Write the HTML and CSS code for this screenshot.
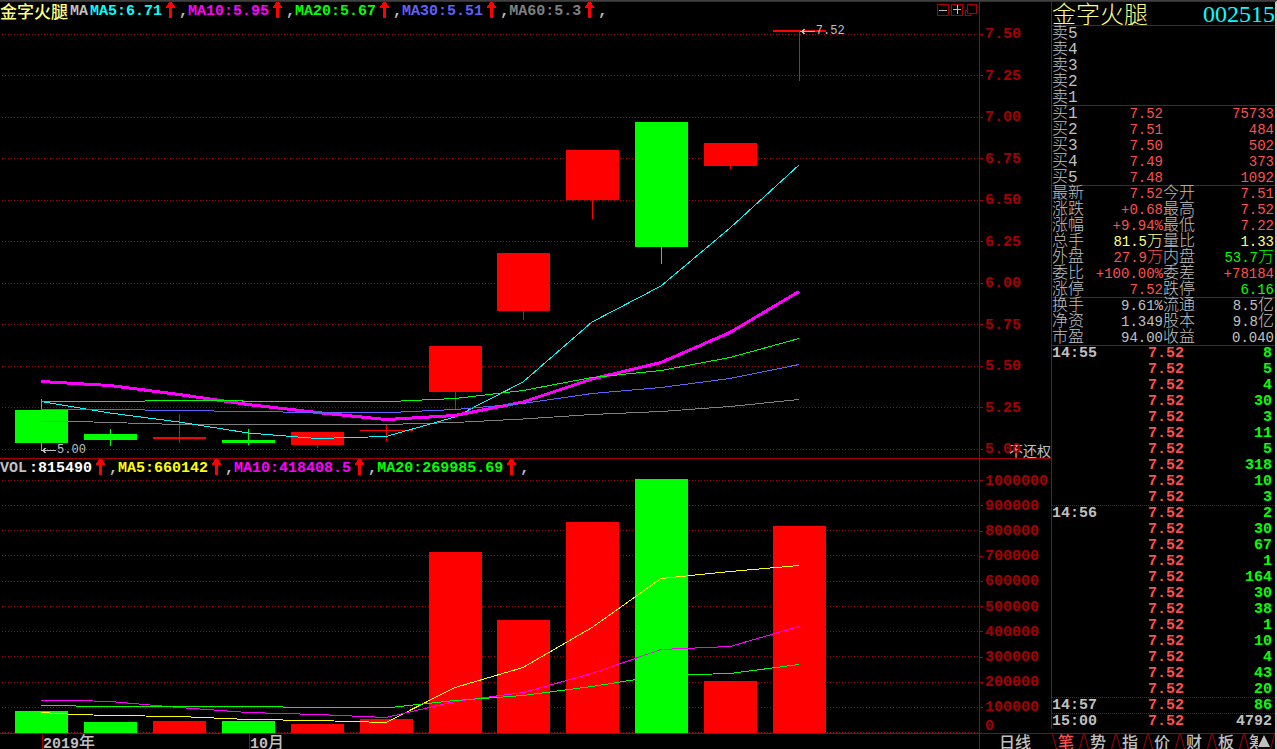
FILE: index.html
```html
<!DOCTYPE html>
<html lang="zh-CN">
<head>
<meta charset="utf-8">
<title>金字火腿 002515</title>
<link rel="stylesheet" href="styles.css">
</head>
<body>
<svg class="defs" aria-hidden="true">
  <symbol id="up" viewBox="0 0 17 16"><path fill="#f00" d="M7 16V6H4V4H5V3H6V1H7V0H10V1H11V3H12V4H13V6H10V16z"/></symbol>
  <symbol id="peak" viewBox="0 0 10 15"><path fill="none" stroke="#a80000" d="M0.5 15L4.5 0L5.5 0L9.5 15"/></symbol>
</svg>
<div class="app">
  <main class="charts">
    <section class="panel">
      <div class="plot">
        <div class="legend">
          <h1 class="name">金字火腿</h1><span class="tag gray">MA</span>
          <span class="cyan">MA5:6.71</span><svg class="up"><use href="#up"/></svg><span class="gray">,</span>
          <span class="magenta">MA10:5.95</span><svg class="up"><use href="#up"/></svg><span class="gray">,</span>
          <span class="green">MA20:5.67</span><svg class="up"><use href="#up"/></svg><span class="gray">,</span>
          <span class="blue">MA30:5.51</span><svg class="up"><use href="#up"/></svg><span class="gray">,</span>
          <span class="dim">MA60:5.3</span><svg class="up"><use href="#up"/></svg><span class="gray">,</span>
          <div class="tools">
            <button type="button" aria-label="缩小"><svg viewBox="0 0 12 12"><path stroke="#a80000" fill="none" d="M.5.5h11v11h-11z"/><path stroke="#c0c0c0" d="M2 6.5h8"/></svg></button>
            <button type="button" aria-label="放大"><svg viewBox="0 0 12 12"><path stroke="#a80000" fill="none" d="M.5.5h11v11h-11z"/><path stroke="#c0c0c0" d="M2 5.5h8M6.5 1v9"/></svg></button>
            <button type="button" aria-label="还原"><svg viewBox="0 0 12 12"><path stroke="#a80000" fill="none" d="M2.5.5h9v9h-9zM2.5 6.5h-2v5h5v-2"/></svg></button>
          </div>
        </div>
        <div class="canvas">
          <svg class="chart" viewBox="0 22 979 436" preserveAspectRatio="none">
            <path class="grid" d="M2 34.5H979M2 75.5H979M2 117.5H979M2 158.5H979M2 200.5H979M2 241.5H979M2 283.5H979M2 324.5H979M2 366.5H979M2 407.5H979M2 449.5H979"/>
            <path class="bull" d="M153 437h53v2h-53zM179 414h1v29h-1zM291 432h53v13h-53zM317 445h1v3h-1zM360 430h53v1h-53zM386 425h1v16h-1zM429 346h53v46h-53zM455 392h1v17h-1zM497 253h53v58h-53zM523 311h1v9h-1zM566 150h53v50h-53zM592 200h1v19h-1zM704 143h53v23h-53zM730 166h1v3h-1zM773 30h53v2h-53zM799 32h1v49h-1z"/>
            <path class="bear" d="M15 410h53v33h-53zM41 399h1v51h-1zM84 434h53v6h-53zM110 429h1v17h-1zM222 440h53v3h-53zM248 429h1v16h-1zM635 122h53v125h-53zM661 247h1v17h-1z"/>
            <path class="line s-dim" d="M41 421.5L76 421.5L110 422.5L179 424.5L386 424.5L455 422.5L523 419L592 414.5L661 411.5L730 406.5L799 399.5"/>
            <path class="line s-cyan" d="M41 401.5L110 413L179 422L248 433L317 438.5L386 436.5L455 417L523 382L592 322L661 286L730 228L799 165"/>
            <path class="line thick s-magenta" d="M41 381.5L110 385.5L179 394.5L248 404.5L317 412.5L386 419.5L455 415.5L523 402L592 379L661 362.5L730 332.5L799 291.5"/>
            <path class="line s-blue" d="M41 409.5L144 409.5L146 410.5L213 410.5L215 411.5L282 411.5L284 412.5L390 412.5L455 409.5L523 403.5L592 393.5L661 387.5L730 378.5L799 364.5"/>
            <path class="line s-green" d="M41 401.5L144 401.5L146 400.5L240 400.5L245 401.5L390 401.5L455 398.5L523 390.5L592 377.5L661 370.5L730 357.5L799 338.5"/>
          </svg>
          <span class="mark high"><svg viewBox="0 0 16 7"><path d="M0 3.5h15M5 1L1 3.5L5 6"/></svg>7.52</span>
          <span class="mark low"><svg viewBox="0 0 16 7"><path d="M0 3.5h15M5 1L1 3.5L5 6"/></svg>5.00</span>
        </div>
      </div>
      <div class="axis">
        <span class="adjust">不还权</span>
        <ol class="ticks price">
          <li>7.50</li><li>7.25</li><li>7.00</li><li>6.75</li><li>6.50</li><li>6.25</li><li>6.00</li><li>5.75</li><li>5.50</li><li>5.25</li><li>5.00</li>
        </ol>
      </div>
    </section>
    <section class="panel">
      <div class="plot volplot">
        <div class="legend">
          <span class="tag vol gray">VOL</span>
          <span class="white">:815490</span><svg class="up"><use href="#up"/></svg><span class="gray">,</span>
          <span class="yellow">MA5:660142</span><svg class="up"><use href="#up"/></svg><span class="gray">,</span>
          <span class="magenta">MA10:418408.5</span><svg class="up"><use href="#up"/></svg><span class="gray">,</span>
          <span class="green">MA20:269985.69</span><svg class="up"><use href="#up"/></svg><span class="gray">,</span>
        </div>
        <div class="canvas">
          <svg class="chart" viewBox="0 477 979 256" preserveAspectRatio="none">
            <path class="grid" d="M2 480.5H979M2 505.5H979M2 530.5H979M2 555.5H979M2 581.5H979M2 606.5H979M2 631.5H979M2 656.5H979M2 682.5H979M2 707.5H979M2 732.5H979"/>
            <path class="bull" d="M153 721h53v12h-53zM291 724h53v9h-53zM360 719h53v14h-53zM429 552h53v181h-53zM497 620h53v113h-53zM566 522h53v211h-53zM704 681h53v52h-53zM773 526h53v207h-53z"/>
            <path class="bear" d="M15 711h53v22h-53zM84 722h53v11h-53zM222 721h53v12h-53zM635 479h53v254h-53z"/>
            <path class="line s-yellow" d="M41 712.5L76 714.5L110 715.5L179 716.5L248 719.5L317 720.5L386 722.5L455 687.5L523 667.5L592 627.5L661 578.5L730 571.5L799 565.5"/>
            <path class="line s-magenta" d="M41 700.5L76 700.5L110 701.5L179 707.5L248 712.5L317 714.5L386 717.5L455 701.5L523 692.5L592 673.5L661 649.5L730 646.5L799 626.5"/>
            <path class="line s-green" d="M41 705.5L75 705.5L77 706.5L282 706.5L284 707.5L390 707.5L455 700.5L523 695.5L592 686.5L661 675.5L730 673.5L799 664.5"/>
          </svg>
        </div>
      </div>
      <div class="axis">
        <ol class="ticks volume">
          <li>1000000</li><li>900000</li><li>800000</li><li>700000</li><li>600000</li><li>500000</li><li>400000</li><li>300000</li><li>200000</li><li>100000</li><li class="zero">0</li>
        </ol>
      </div>
    </section>
    <footer class="dates">
      <div class="months"><time>2019<b>年</b></time><time>10<b>月</b></time></div>
      <div class="period">日线</div>
    </footer>
  </main>

  <aside class="side">
    <header class="stock"><h2>金字火腿</h2><span>002515</span></header>
    <table class="quote">
      <tbody>
        <tr><th>卖5</th><td></td><td></td></tr>
        <tr><th>卖4</th><td></td><td></td></tr>
        <tr><th>卖3</th><td></td><td></td></tr>
        <tr><th>卖2</th><td></td><td></td></tr>
        <tr><th>卖1</th><td></td><td></td></tr>
      </tbody>
    </table>
    <table class="quote red">
      <tbody>
        <tr><th>买1</th><td>7.52</td><td>75733</td></tr>
        <tr><th>买2</th><td>7.51</td><td>484</td></tr>
        <tr><th>买3</th><td>7.50</td><td>502</td></tr>
        <tr><th>买4</th><td>7.49</td><td>373</td></tr>
        <tr><th>买5</th><td>7.48</td><td>1092</td></tr>
      </tbody>
    </table>
    <table class="quote red">
      <tbody>
        <tr><th>最新</th><td>7.52</td><th>今开</th><td>7.51</td></tr>
        <tr><th>涨跌</th><td>+0.68</td><th>最高</th><td>7.52</td></tr>
        <tr><th>涨幅</th><td>+9.94%</td><th>最低</th><td>7.22</td></tr>
        <tr><th>总手</th><td class="pale">81.5<i>万</i></td><th>量比</th><td class="pale">1.33</td></tr>
        <tr><th>外盘</th><td>27.9<i>万</i></td><th>内盘</th><td class="green">53.7<i>万</i></td></tr>
        <tr><th>委比</th><td>+100.00%</td><th>委差</th><td>+78184</td></tr>
        <tr><th>涨停</th><td>7.52</td><th>跌停</th><td class="green">6.16</td></tr>
      </tbody>
    </table>
    <table class="quote">
      <tbody>
        <tr><th>换手</th><td>9.61%</td><th>流通</th><td>8.5<i>亿</i></td></tr>
        <tr><th>净资</th><td>1.349</td><th>股本</th><td>9.8<i>亿</i></td></tr>
        <tr><th>市盈</th><td>94.00</td><th>收益</th><td>0.040</td></tr>
      </tbody>
    </table>
    <table class="tape">
      <tbody>
        <tr><th>14:55</th><td>7.52</td><td>8</td></tr>
        <tr><th></th><td>7.52</td><td>5</td></tr>
        <tr><th></th><td>7.52</td><td>4</td></tr>
        <tr><th></th><td>7.52</td><td>30</td></tr>
        <tr><th></th><td>7.52</td><td>3</td></tr>
        <tr><th></th><td>7.52</td><td>11</td></tr>
        <tr><th></th><td>7.52</td><td>5</td></tr>
        <tr><th></th><td>7.52</td><td>318</td></tr>
        <tr><th></th><td>7.52</td><td>10</td></tr>
        <tr><th></th><td>7.52</td><td>3</td></tr>
        <tr class="minute"><th>14:56</th><td>7.52</td><td>2</td></tr>
        <tr><th></th><td>7.52</td><td>30</td></tr>
        <tr><th></th><td>7.52</td><td>67</td></tr>
        <tr><th></th><td>7.52</td><td>1</td></tr>
        <tr><th></th><td>7.52</td><td>164</td></tr>
        <tr><th></th><td>7.52</td><td>30</td></tr>
        <tr><th></th><td>7.52</td><td>38</td></tr>
        <tr><th></th><td>7.52</td><td>1</td></tr>
        <tr><th></th><td>7.52</td><td>10</td></tr>
        <tr><th></th><td>7.52</td><td>4</td></tr>
        <tr><th></th><td>7.52</td><td>43</td></tr>
        <tr><th></th><td>7.52</td><td>20</td></tr>
        <tr class="minute"><th>14:57</th><td>7.52</td><td>86</td></tr>
        <tr class="minute"><th>15:00</th><td>7.52</td><td class="gray">4792</td></tr>
      </tbody>
    </table>
    <nav class="tabs">
      <svg class="half" viewBox="5 0 5 15"><path fill="none" stroke="#a80000" d="M5.5 0L9.5 15"/></svg>
      <button type="button" class="active">笔</button><svg><use href="#peak"/></svg>
      <button type="button">势</button><svg><use href="#peak"/></svg>
      <button type="button">指</button><svg><use href="#peak"/></svg>
      <button type="button">价</button><svg><use href="#peak"/></svg>
      <button type="button">财</button><svg><use href="#peak"/></svg>
      <button type="button">板</button><svg><use href="#peak"/></svg>
      <button type="button" class="cut">筹</button>
      <button type="button" class="more" aria-label="更多"><svg viewBox="0 0 12 15"><path fill="#c0c0c0" d="M6 1L12 13H0z"/></svg></button>
      <svg class="half" viewBox="0 0 5 15"><path fill="none" stroke="#a80000" d="M0.5 15L4.5 0"/></svg>
    </nav>
  </aside>
</div>
</body>
</html>
```
FILE: styles.css
```css
:root {
  --rule: #a80000;
  --text: #c0c0c0;
  --mono: "Liberation Mono", "Noto Sans CJK SC", monospace;
  --cjk: "Noto Sans CJK SC", sans-serif;
}

* { box-sizing: border-box; }

body {
  margin: 0;
  background: #000;
  color: var(--text);
  font-family: var(--mono);
  font-size: 15px;
}

h1, h2, ol { margin: 0; padding: 0; }
ol { list-style: none; }
button { border: 0; padding: 0; background: none; color: inherit; }
.defs { position: absolute; width: 0; height: 0; }

.app {
  display: grid;
  grid-template-columns: minmax(0, 1fr) 226px;
  height: 100vh;
  min-height: 748px;
  border-top: 1px solid #404040;
}

.gray { color: var(--text); }
.dim { color: #808080; }
.cyan { color: #0ff; }
.magenta { color: #f0f; }
.green { color: #0f0; }
.blue { color: #6060ff; }
.yellow { color: #ff0; }
.white { color: #fff; }
.pale { color: #ffff80; }

/* charts */
.charts {
  display: grid;
  grid-template-rows: minmax(0, 457fr) minmax(0, 275fr) 15px;
  border-top: 1px solid var(--rule);
  min-height: 0;
}

.panel {
  display: grid;
  grid-template-columns: minmax(0, 1fr) 72px;
  border-bottom: 1px solid var(--rule);
}

.plot {
  display: grid;
  grid-template-rows: 20px minmax(0, 1fr);
  min-height: 0;
}
.volplot { grid-template-rows: 18px minmax(0, 1fr); }

.legend {
  display: flex;
  font-weight: bold;
  line-height: 20px;
  white-space: nowrap;
}
.name { color: #ffff80; font: 500 17px/18px var(--cjk); }
.tag { margin: 0 2px; }
.vol { margin: 0 2px 0 0; }
.up { width: 17px; height: 16px; flex: none; }

.tools {
  display: flex;
  gap: 2px;
  margin: 2px 2px 0 auto;
}
.tools button { width: 12px; height: 12px; }
.tools svg { display: block; width: 12px; height: 12px; shape-rendering: crispEdges; }

.canvas { position: relative; min-height: 0; }
.chart { display: block; width: 100%; height: 100%; shape-rendering: crispEdges; }
.chart path { vector-effect: non-scaling-stroke; }
.grid { stroke: var(--rule); stroke-dasharray: 1 2; }
.bull { fill: #f00; }
.bear { fill: #0f0; }
.line { fill: none; stroke-width: 1px; }
.thick { stroke-width: 3px; }
.s-dim { stroke: #808080; }
.s-cyan { stroke: #0ff; }
.s-magenta { stroke: #f0f; }
.s-blue { stroke: #6060ff; }
.s-green { stroke: #0f0; }
.s-yellow { stroke: #ff0; }

.mark {
  position: absolute;
  display: flex;
  align-items: center;
  font-size: 12px;
  line-height: 14px;
}
.mark svg { width: 16px; height: 7px; fill: none; stroke: var(--text); shape-rendering: crispEdges; }
.high { left: 81.7%; top: 2px; }
.low { left: 4.2%; bottom: 1px; }

.axis {
  position: relative;
  border-left: 1px solid var(--rule);
  color: var(--rule);
  font-weight: bold;
}
.adjust {
  position: absolute;
  right: 0;
  bottom: 0;
  color: var(--text);
  font: 14px/15px var(--cjk);
}
.ticks {
  position: relative;
  display: flex;
  flex-direction: column;
  height: 100%;
}
.ticks li {
  display: flex;
  align-items: center;
  gap: 2px;
  line-height: 16px;
}
.ticks li::before {
  content: "";
  width: 3px;
  height: 1px;
  margin-bottom: 2px;
  background: var(--rule);
}
.price { justify-content: space-between; padding-top: 25px; }
.volume { padding-top: 10px; }
.volume li { flex: 1; }
.volume .zero { flex: none; height: 12px; line-height: 12px; }
.zero::before { visibility: hidden; }

.dates {
  display: grid;
  grid-template-columns: minmax(0, 1fr) 72px;
  line-height: 15px;
}
.months { display: grid; grid-template-columns: 207fr 730fr; padding-left: 42px; }
.months time { border-left: 1px solid var(--rule); font-weight: bold; }
.months b { font: 500 16px/15px var(--cjk); }
.period {
  border-left: 1px solid var(--rule);
  padding-left: 19px;
  font: 500 16px/15px var(--cjk);
}

/* quote column */
.side {
  display: flex;
  flex-direction: column;
  border-top: 1px solid var(--rule);
  border-right: 2px solid #d4d0c8;
}
.stock {
  display: flex;
  justify-content: space-between;
  height: 23px;
  border-left: 1px solid var(--rule);
  line-height: 24px;
}
.stock h2 { color: #ffff80; font: 300 24px/22px var(--cjk); }
.stock span { color: #0ff; font-family: "Liberation Serif", serif; font-size: 24px; }

.quote, .tape {
  width: 100%;
  table-layout: fixed;
  border-collapse: separate;
  border-spacing: 0;
  border-left: 1px solid var(--rule);
  box-shadow: inset 0 1px var(--rule);
}
.quote th, .quote td, .tape th, .tape td {
  height: 16px;
  padding: 2px 0 0;
  line-height: 14px;
  white-space: nowrap;
}
.quote th { width: 32px; font: 300 16px/14px var(--mono); text-align: left; }
.quote td { font-size: 14px; text-align: right; }
.quote td:nth-child(2) { width: 79px; }
.quote td:last-child { padding-right: 1px; }
.quote i { font: 300 16px/1px var(--cjk); }
.red td { color: #ff5050; }
.red td.pale { color: #ffff80; }
.red td.green { color: #0f0; }

.tape { font-weight: bold; }
.tape th { width: 96px; text-align: left; }
.tape td { color: #ff5050; }
.tape td:last-child { color: #0f0; text-align: right; padding-right: 3px; }
.tape td.gray:last-child { color: var(--text); }
.minute {
  background: repeating-linear-gradient(90deg, var(--rule) 0 1px, transparent 1px 2px) 0 0 / 100% 1px no-repeat;
}

.tabs {
  display: flex;
  height: 16px;
  margin-top: auto;
  padding-left: 1px;
  border-top: 1px solid var(--rule);
}
.tabs > svg { width: 10px; height: 15px; flex: none; }
.tabs > .half { width: 5px; }
.tabs button {
  width: 22px;
  padding-left: 1px;
  font: 500 16px/15px var(--cjk);
  text-align: left;
  overflow: hidden;
}
.tabs .cut { width: 9px; padding: 0; }
.tabs .more { width: 12px; padding: 0; }
.tabs .active { color: #ff5050; }
.more svg { display: block; width: 12px; height: 15px; }
```
